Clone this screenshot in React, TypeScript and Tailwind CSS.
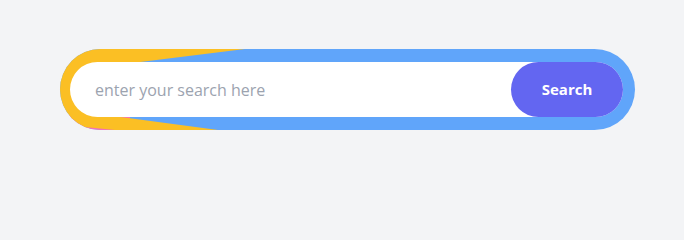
import React, { useState } from 'react';

export default function App() {
    const [query, setQuery] = useState('');

    return (
        <div className="min-h-screen w-full bg-gray-100 pt-[49px] pl-[60px]" style={{ fontFamily: '"Open Sans", "Noto Sans", sans-serif' }}>
            {/* Gradient border pill */}
            <div className="relative w-[575px] h-[81px] rounded-full overflow-hidden bg-[#60a5fa]">
                {/* pink sliver under the yellow */}
                <div className="absolute inset-0 bg-[#f472b6] [clip-path:polygon(0_66px,70px_66px,70px_81px,0_81px)]" />
                {/* yellow sweep */}
                <div className="absolute inset-0 bg-[#fbbf24] [clip-path:polygon(0_0,185px_0,60px_15.5px,60px_68px,70px_69.3px,158px_81px,55px_81px,30px_78.5px,0_78.5px)]" />

                <div className="relative flex h-full pt-[13px] pb-[13px] pl-[10px] pr-[12px]">
                    <div className="flex flex-1 items-center bg-white rounded-full">
                        <input
                            type="text"
                            value={query}
                            onChange={(e) => setQuery(e.target.value)}
                            placeholder="enter your search here"
                            className="flex-1 h-full bg-transparent pl-[25px] text-[16px] text-gray-700 placeholder:text-[#9ca3af] focus:outline-none"
                        />
                        <button className="w-[112px] h-full rounded-full bg-[#6366f1] text-white font-bold text-[15px]">
                            Search
                        </button>
                    </div>
                </div>
            </div>
        </div>
    );
}
